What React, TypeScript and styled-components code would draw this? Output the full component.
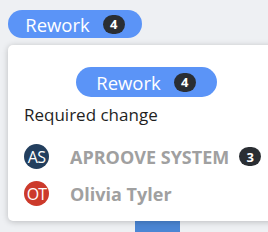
import React from "react";
import styled, { createGlobalStyle } from "styled-components";

const GlobalStyle = createGlobalStyle`
  html, body {
    margin: 0;
    padding: 0;
    background: #eef0f3;
    overflow: hidden;
  }
  body {
    font-family: "Open Sans", "Liberation Sans", sans-serif;
  }
`;

const Page = styled.div`
  width: 268px;
  height: 232px;
  overflow: hidden;
  padding: 10px 0 0 8px;
  box-sizing: border-box;
`;

const Pill = styled.div<{ $w: number; $h: number }>`
  display: inline-flex;
  align-items: center;
  justify-content: center;
  gap: 13px;
  height: ${(p) => p.$h}px;
  width: ${(p) => p.$w}px;
  border-radius: 999px;
  background: #5b94f7;
  color: #fff;
  font-size: 18.5px;
  box-sizing: border-box;
`;

const Count = styled.span`
  display: inline-flex;
  align-items: center;
  justify-content: center;
  min-width: 22px;
  height: 19px;
  padding: 0 2px;
  border-radius: 10px;
  background: #2a2e33;
  color: #fff;
  font-size: 13px;
  font-weight: 700;
  box-sizing: border-box;
`;

const Card = styled.div`
  margin-top: 7px;
  width: 280px;
  height: 176px;
  background: #fff;
  border-radius: 5px;
  box-shadow: 0 1px 6px rgba(0, 0, 0, 0.22);
  box-sizing: border-box;
  padding: 22px 0 0 16px;
  position: relative;
  z-index: 1;
`;

const Center = styled.div`
  width: 244px;
  display: flex;
  justify-content: center;
`;

const Label = styled.div`
  margin-top: 7px;
  font-size: 17px;
  color: #1f1f1f;
  line-height: 22px;
`;

const List = styled.div`
  margin-top: 18px;
  display: flex;
  flex-direction: column;
  gap: 12px;
`;

const Row = styled.div`
  display: flex;
  align-items: center;
  gap: 10px;
  height: 25px;
`;

const Avatar = styled.div<{ $bg: string }>`
  width: 25px;
  height: 25px;
  border-radius: 50%;
  background: ${(p) => p.$bg};
  color: #fff;
  font-size: 16px;
  display: flex;
  align-items: center;
  justify-content: center;
  letter-spacing: -0.8px;
`;

const Name = styled.span`
  font-size: 18px;
  font-weight: 700;
  color: #a0a0a0;
  margin-left: 11px;
`;

const Backdrop = styled.div`
  margin-left: 127px;
  width: 45px;
  height: 20px;
  background: #4b86d4;
`;

export default function App() {
  return (
    <>
      <GlobalStyle />
      <Page>
        <Pill $w={134} $h={28}>
          Rework <Count>4</Count>
        </Pill>
        <Card>
          <Center>
            <Pill $w={141} $h={30}>
              Rework <Count>4</Count>
            </Pill>
          </Center>
          <Label>Required change</Label>
          <List>
            <Row>
              <Avatar $bg="#233f5e">AS</Avatar>
              <Name>APROOVE SYSTEM</Name>
              <Count>3</Count>
            </Row>
            <Row>
              <Avatar $bg="#cc3a2b">OT</Avatar>
              <Name>Olivia Tyler</Name>
            </Row>
          </List>
        </Card>
        <Backdrop />
      </Page>
    </>
  );
}
